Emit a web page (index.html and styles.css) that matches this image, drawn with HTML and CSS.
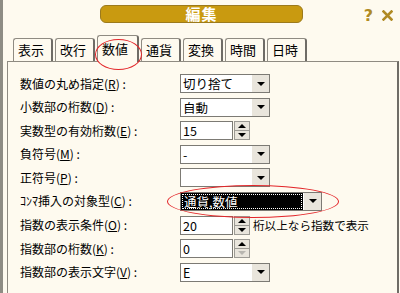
FILE: index.html
```html
<!DOCTYPE html>
<html>
<head>
  <title>編集</title>
  <link rel="stylesheet" href="styles.css">
</head>
<body>
  <div class="window">
    <div class="titlebar">
      <div class="title">編集</div>
      <div class="title-icons">
        <span class="help">?</span>
        <svg class="close" width="11" height="11" viewBox="0 0 11 11">
          <path d="M1.5 1.5 L9.5 9.5 M9.5 1.5 L1.5 9.5" stroke="#b08a24" stroke-width="2.6" stroke-linecap="square"/>
        </svg>
      </div>
    </div>

    <div class="tabs">
      <div class="tab">表示</div>
      <div class="tab">改行</div>
      <div class="tab active">数値<span class="mark tab-mark"></span></div>
      <div class="tab">通貨</div>
      <div class="tab">変換</div>
      <div class="tab">時間</div>
      <div class="tab">日時</div>
    </div>

    <div class="panel">
      <div class="form">
        <label>数値の丸め指定(<u>R</u>) :</label>
        <div class="field">
          <div class="combo"><span class="combo-text">切り捨て</span><span class="combo-btn"><i class="arrow-down"></i></span></div>
        </div>

        <label>小数部の桁数(<u>D</u>) :</label>
        <div class="field">
          <div class="combo"><span class="combo-text">自動</span><span class="combo-btn"><i class="arrow-down"></i></span></div>
        </div>

        <label>実数型の有効桁数(<u>E</u>) :</label>
        <div class="field">
          <div class="spin-input">15</div>
          <div class="spin"><span class="spin-btn"><i class="arrow-up"></i></span><span class="spin-btn"><i class="arrow-down"></i></span></div>
        </div>

        <label>負符号(<u>M</u>) :</label>
        <div class="field">
          <div class="combo"><span class="combo-text">-</span><span class="combo-btn"><i class="arrow-down"></i></span></div>
        </div>

        <label>正符号(<u>P</u>) :</label>
        <div class="field">
          <div class="combo"><span class="combo-text"></span><span class="combo-btn"><i class="arrow-down"></i></span></div>
        </div>

        <label>ｺﾝﾏ挿入の対象型(<u>C</u>) :</label>
        <div class="field">
          <div class="combo wide selected"><span class="combo-text"><span class="focus">通貨,数値</span></span><span class="combo-btn"><i class="arrow-down"></i></span><span class="mark combo-mark"></span></div>
        </div>

        <label>指数の表示条件(<u>O</u>) :</label>
        <div class="field">
          <div class="spin-input">20</div>
          <div class="spin"><span class="spin-btn"><i class="arrow-up"></i></span><span class="spin-btn"><i class="arrow-down"></i></span></div>
          <span class="suffix">桁以上なら指数で表示</span>
        </div>

        <label>指数部の桁数(<u>K</u>) :</label>
        <div class="field">
          <div class="spin-input">0</div>
          <div class="spin"><span class="spin-btn"><i class="arrow-up"></i></span><span class="spin-btn"><i class="arrow-down disabled"></i></span></div>
        </div>

        <label>指数部の表示文字(<u>V</u>) :</label>
        <div class="field">
          <div class="combo"><span class="combo-text">E</span><span class="combo-btn"><i class="arrow-down"></i></span></div>
        </div>
      </div>
    </div>
  </div>
</body>
</html>
```

FILE: styles.css
```css
:root {
  --page-bg: #fefaef;
  --frame: #8e8c84;
  --edge: #8f8b82;
  --edge-dark: #6f6c66;
  --gold: #c99a10;
  --gold-dark: #9c7a1c;
  --icon: #b08a24;
  --button-bg: #e9e5dc;
  --mark: #e3262a;
}

body {
  margin: 0;
  background: var(--page-bg);
  color: #000;
  font-family: "Noto Sans CJK JP", "Noto Sans", sans-serif;
  font-size: 12px;
  overflow: hidden;
}

.window {
  height: 293px;
  box-sizing: border-box;
  border-left: 3px solid var(--frame);
  overflow: hidden;
}

/* title row */
.titlebar {
  display: flex;
  align-items: flex-start;
  padding-top: 5px;
  height: 18px;
}

.title {
  margin-left: 97px;
  width: 203px;
  height: 18px;
  box-sizing: border-box;
  background: var(--gold);
  border: 1px solid var(--gold-dark);
  border-radius: 6px;
  color: #fff;
  font-size: 15px;
  font-weight: bold;
  line-height: 16px;
  text-align: center;
  letter-spacing: 1px;
}

.title-icons {
  margin-left: auto;
  margin-right: 7px;
  display: flex;
  align-items: center;
  gap: 9px;
  padding-top: 4px;
}

.help {
  color: var(--icon);
  font-family: "DejaVu Sans", sans-serif;
  font-size: 16px;
  font-weight: bold;
  line-height: 13px;
}

/* tabs */
.tabs {
  display: flex;
  align-items: flex-end;
  gap: 2px;
  height: 38px;
  padding-left: 10px;
}

.tab {
  position: relative;
  width: 40px;
  height: 23px;
  box-sizing: border-box;
  border: 1px solid var(--edge);
  border-right: 2px solid var(--edge-dark);
  border-bottom: none;
  border-radius: 3px 3px 0 0;
  padding-left: 4px;
  font-size: 13px;
  line-height: 22px;
  background: var(--page-bg);
}

.tab.active {
  width: 42px;
  height: 27px;
  margin-bottom: -1px;
  z-index: 1;
  line-height: 26px;
}

/* red annotation rings */
.mark {
  position: absolute;
  border: 1.5px solid var(--mark);
  border-radius: 50%;
  pointer-events: none;
}

.tab-mark {
  left: -3px;
  top: 3px;
  width: 45px;
  height: 29px;
}

.combo-mark {
  left: -14px;
  top: -8px;
  width: 170px;
  height: 31px;
}

/* panel */
.panel {
  margin-left: 4px;
  margin-right: 1px;
  height: 240px;
  border: 1px solid var(--edge);
  border-right: 2px solid var(--edge-dark);
  border-bottom: none;
}

.form {
  display: grid;
  grid-template-columns: 160px 1fr;
  grid-auto-rows: 19px;
  row-gap: 4.6px;
  padding: 12px 0 0 12px;
}

.form label {
  align-self: center;
  white-space: nowrap;
  line-height: 14px;
}

.field {
  display: flex;
  align-items: center;
  gap: 1px;
}

.combo {
  position: relative;
  display: flex;
  width: 90px;
  height: 19px;
  box-sizing: border-box;
  border: 1px solid #7c7a74;
  background: #fff;
}

.combo.wide {
  width: 142px;
}

.combo-text {
  flex: 1;
  padding-left: 2px;
  line-height: 17px;
  font-size: 12.5px;
}

.combo-btn {
  width: 17px;
  display: flex;
  align-items: center;
  justify-content: center;
  background: var(--button-bg);
  border-left: 1px solid #fff;
}

.selected .combo-text {
  background: #000;
  color: #fff;
  padding: 1px;
}

.focus {
  display: block;
  height: 100%;
  box-sizing: border-box;
  border: 1px dotted #fff;
  line-height: 13px;
  padding-left: 1px;
}

.arrow-down,
.arrow-up {
  display: block;
  width: 0;
  height: 0;
  border-left: 4px solid transparent;
  border-right: 4px solid transparent;
}

.arrow-down {
  border-top: 4px solid #000;
}

.arrow-up {
  border-bottom: 4px solid #000;
}

.arrow-down.disabled {
  border-top-color: #b8b6b0;
}

/* spin boxes */
.spin-input {
  width: 53px;
  height: 19px;
  box-sizing: border-box;
  border: 1px solid #7c7a74;
  background: #fff;
  padding-left: 2px;
  line-height: 17px;
  font-size: 12.5px;
}

.spin {
  display: flex;
  flex-direction: column;
  width: 16px;
  height: 19px;
  box-sizing: border-box;
  border: 1px solid #9c9a94;
  background: var(--button-bg);
}

.spin-btn {
  flex: 1;
  display: flex;
  align-items: center;
  justify-content: center;
}

.spin-btn + .spin-btn {
  border-top: 1px solid #9c9a94;
}

.suffix {
  margin-left: 2px;
  white-space: nowrap;
  font-size: 11.6px;
}
```
